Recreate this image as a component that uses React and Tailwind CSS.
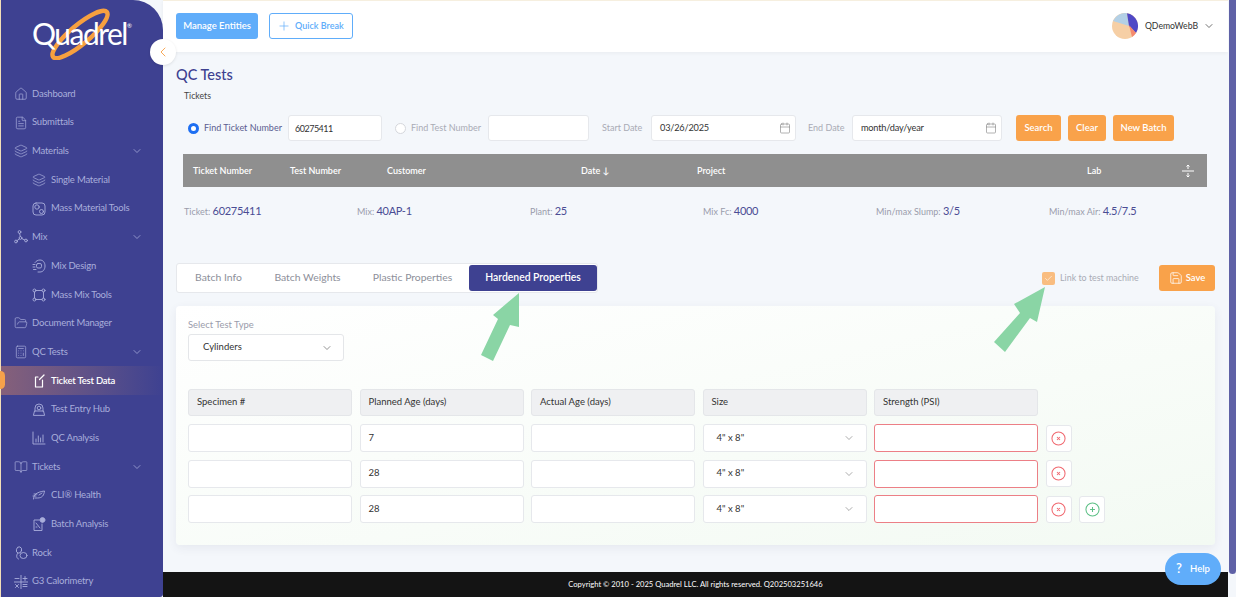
import {
  BookOpen, Calendar, ChevronDown, ChevronLeft, FileText, FolderOpen, House, Layers, Plus, Save, Check, Calculator,
} from 'lucide-react'

const line = { fill: 'none', stroke: 'currentColor', strokeWidth: 0.9, strokeLinecap: 'round', strokeLinejoin: 'round' }

function Glyph({ children }) {
  return <svg viewBox="0 0 14 14" className="w-[14px] h-[14px] shrink-0" {...line}>{children}</svg>
}

const MassMaterial = () => (
  <Glyph>
    <rect x="1" y="1" width="12" height="12" rx="3" />
    <circle cx="5" cy="5" r="2.2" />
    <circle cx="9.5" cy="9.5" r="2" />
  </Glyph>
)
const MixNodes = () => (
  <Glyph>
    <circle cx="5.5" cy="2" r="1.4" />
    <circle cx="2" cy="11.5" r="1.4" />
    <circle cx="6.5" cy="8" r="1.4" />
    <circle cx="12" cy="10.5" r="1.4" />
    <path d="M5.6 3.4L6.3 6.6M5.4 8.9L3.1 10.6M7.8 8.6L10.7 10" />
  </Glyph>
)
const MixDesign = () => (
  <Glyph>
    <path d="M3 3.5C4 2 6 1 8 1c3 0 5 2.5 5 6 0 3.5-2 6-5 6H6" />
    <rect x="4.5" y="4.5" width="5" height="4.5" rx="1.5" />
    <path d="M1 5.5h2M1 8h2M1.5 10.5h2.5" />
  </Glyph>
)
const MassMix = () => (
  <Glyph>
    <circle cx="2.5" cy="2.5" r="1.5" />
    <circle cx="11.5" cy="2.5" r="1.5" />
    <circle cx="2.5" cy="11.5" r="1.5" />
    <circle cx="11.5" cy="11.5" r="1.5" />
    <path d="M4 2.5h6M2.5 4v6M11.5 4v6M4 11.5h6" />
  </Glyph>
)
const TicketData = () => (
  <Glyph>
    <path d="M6 3H3.5v10h7V6" strokeWidth="1.2" />
    <path d="M7.5 5.5L12 1" strokeWidth="1.2" />
  </Glyph>
)
const EntryHub = () => (
  <Glyph>
    <path d="M3 9V6a4 4 0 0 1 8 0v3" />
    <circle cx="7" cy="6" r="1.8" />
    <path d="M1.5 13l1-4h9l1 4z" />
  </Glyph>
)
const Analysis = () => (
  <Glyph>
    <path d="M1 1v12h12M4 11V8M6.3 11V5M8.6 11V7M11 11V4" />
  </Glyph>
)
const CliHealth = () => (
  <Glyph>
    <path d="M1.5 11c0-4 3-7 11-8-.5 4-2 7-7 7H3" />
    <path d="M1 8h3M2 6h3M7 7l3-2" />
  </Glyph>
)
const BatchDoc = () => (
  <Glyph>
    <path d="M8 3H2v10.5h8V7" />
    <path d="M4 6l4 5M4 10h1" />
    <circle cx="10.5" cy="3" r="2.4" fill="currentColor" />
  </Glyph>
)
const Rock = () => (
  <Glyph>
    <ellipse cx="5" cy="4" rx="2.6" ry="3.2" transform="rotate(15 5 4)" />
    <path d="M3.5 7.5C2 9.5 2.5 12.5 4.5 13" />
    <ellipse cx="9.5" cy="9.5" rx="3.5" ry="3" />
  </Glyph>
)
const MathGrid = () => (
  <Glyph>
    <path d="M0 7h14M7 0v14M1 3.5h4M9 3.5h4M11 1.5v4M9 9.5h4M9 11.5h4M1.5 9.5l3 3M4.5 9.5l-3 3" />
  </Glyph>
)
const Lucide = (Icon) => () => <Icon className="w-[14px] h-[14px] shrink-0" strokeWidth={1.2} />

const nav = [
  { label: 'Dashboard', icon: Lucide(House) },
  { label: 'Submittals', icon: Lucide(FileText) },
  { label: 'Materials', icon: Lucide(Layers), caret: true },
  { label: 'Single Material', icon: Lucide(Layers), sub: true },
  { label: 'Mass Material Tools', icon: MassMaterial, sub: true },
  { label: 'Mix', icon: MixNodes, caret: true },
  { label: 'Mix Design', icon: MixDesign, sub: true },
  { label: 'Mass Mix Tools', icon: MassMix, sub: true },
  { label: 'Document Manager', icon: Lucide(FolderOpen) },
  { label: 'QC Tests', icon: Lucide(Calculator), caret: true },
  { label: 'Ticket Test Data', icon: TicketData, sub: true, active: true },
  { label: 'Test Entry Hub', icon: EntryHub, sub: true },
  { label: 'QC Analysis', icon: Analysis, sub: true },
  { label: 'Tickets', icon: Lucide(BookOpen), caret: true },
  { label: 'CLI® Health', icon: CliHealth, sub: true },
  { label: 'Batch Analysis', icon: BatchDoc, sub: true },
  { label: 'Rock', icon: Rock },
  { label: 'G3 Calorimetry', icon: MathGrid },
]

function NavRow({ item }) {
  const Icon = item.icon
  return (
    <div className={`relative flex items-center h-[28.7px] pr-[20px] text-[9.5px] tracking-[-0.2px] ${item.sub ? 'pl-[31px]' : 'pl-[13px]'} ${item.active ? 'bg-gradient-to-r from-[#86607a] to-[#3e4191] text-white font-semibold' : 'text-[#a9aedb]'}`}>
      {item.active && <span className="absolute -left-[5px] top-[5px] w-[9px] h-[18px] rounded-full bg-[#f7a14a]" />}
      <Icon />
      <span className={`whitespace-nowrap ${item.sub ? 'ml-[5px]' : 'ml-[4px]'}`}>{item.label}</span>
      {item.caret && <ChevronDown className="ml-auto w-[12px] h-[12px]" strokeWidth={1.5} />}
    </div>
  )
}

function Sidebar() {
  return (
    <aside className="relative w-[163px] shrink-0 bg-[#3e4191] rounded-tr-[30px] rounded-br-[3px] border-l border-[#f3dfb8]">
      <div className="absolute left-[33px] top-[8px] w-[100px] h-[52px]">
        <svg viewBox="0 0 100 52" className="absolute inset-0 w-full h-full" fill="none">
          <ellipse cx="46" cy="26.5" rx="35" ry="9.5" transform="rotate(-40 46 26.5)" stroke="#f7a03f" strokeWidth="4.5" />
        </svg>
        <span className="absolute -left-[2px] top-[7px] text-[30px] leading-[36px] tracking-[-1.5px] text-white">Quadrel</span>
        <span className="absolute left-[93px] top-[14px] text-[6px] leading-[8px] text-white">®</span>
      </div>
      <nav className="pt-[79.5px]">
        {nav.map((item) => <NavRow key={item.label} item={item} />)}
      </nav>
    </aside>
  )
}

function Field({ value, className = '' }) {
  return (
    <input readOnly value={value} className={`h-[26px] rounded-[3px] border border-[#e6e8ec] bg-white px-[6px] text-[9px] tracking-[-0.5px] text-[#333] outline-none ${className}`} />
  )
}

function DateField({ value, className = '' }) {
  return (
    <div className={`flex items-center justify-between h-[26px] rounded-[3px] border border-[#e6e8ec] bg-white pl-[8px] pr-[4px] text-[9.2px] tracking-[-0.2px] text-[#333] ${className}`}>
      <span>{value}</span>
      <Calendar className="w-[12px] h-[12px] text-[#888]" strokeWidth={1.3} />
    </div>
  )
}

function OrangeButton({ children, className = '' }) {
  return (
    <button className={`h-[26px] rounded-[3px] bg-[#f9a24a] text-white text-[9.5px] font-semibold ${className}`}>{children}</button>
  )
}

function Cell({ children, invalid, className = '' }) {
  return (
    <div className={`flex items-center w-[164px] h-[28px] rounded-[3px] border bg-white text-[9.5px] text-[#333] ${invalid ? 'border-[#ec7f86]' : 'border-[#e6e8ec]'} ${className}`}>
      {children}
    </div>
  )
}

function IconCell({ color, children }) {
  return (
    <div className={`flex items-center justify-center w-[26px] h-[27px] rounded-[3px] border border-[#e6e8ec] bg-white ${color}`}>
      <svg viewBox="0 0 16 16" className="w-[15px] h-[15px]" fill="none" stroke="currentColor" strokeWidth="1.1">
        <circle cx="8" cy="8" r="7" />
        {children}
      </svg>
    </div>
  )
}

function Row({ age, add }) {
  return (
    <div className="flex gap-[7.5px] items-center">
      <Cell />
      <Cell className="pl-[8px]">{age}</Cell>
      <Cell />
      <Cell className="justify-between pl-[13px] pr-[11px]">
        4" x 8"
        <ChevronDown className="w-[12px] h-[12px] text-[#888]" strokeWidth={1.4} />
      </Cell>
      <Cell invalid />
      <IconCell color="text-[#f0686f]">
        <path d="M6.4 6.4l3.2 3.2M9.6 6.4l-3.2 3.2" />
      </IconCell>
      {add && (
        <IconCell color="text-[#5cbf85]">
          <path d="M8 5.4v5.2M5.4 8h5.2" />
        </IconCell>
      )}
    </div>
  )
}

function Head({ children }) {
  return (
    <div className="flex items-center w-[164px] h-[27px] rounded-[3px] border border-[#e4e6e9] bg-[#eff0f2] pl-[8px] text-[9.5px] text-[#333]">{children}</div>
  )
}

function Stat({ label, value }) {
  return (
    <div className="whitespace-nowrap text-[9px] text-[#9a9cab]">
      {label}: <span className="text-[11px] tracking-[-0.3px] text-[#4a4c94]">{value}</span>
    </div>
  )
}

export default function App() {
  return (
    <div className="relative flex w-[1236px] h-[597px] overflow-hidden bg-[#f4f7fb] font-['Lato',sans-serif]">
      <Sidebar />
      <button className="absolute left-[150px] top-[39px] w-[26px] h-[26px] rounded-full bg-white shadow-[0_1px_3px_rgba(0,0,0,0.1)] flex items-center justify-center z-10">
        <ChevronLeft className="w-[16px] h-[16px] text-[#f7a14a]" strokeWidth={1.4} />
      </button>

      <main className="flex-1 min-w-0 flex flex-col">
        <header className="flex items-start h-[52px] shrink-0 bg-white border-t border-[#f6efdf] shadow-[0_1px_4px_rgba(0,0,0,0.05)] pt-[12px] pl-[13px] pr-[13px]">
          <button className="w-[82px] h-[26px] rounded-[3px] bg-[#60adfa] text-white text-[9.5px] font-semibold">Manage Entities</button>
          <button className="flex items-center gap-[4px] ml-[11px] pl-[7px] w-[84px] h-[26px] rounded-[3px] border border-[#60adfa] text-[#60adfa] text-[9px] font-semibold">
            <Plus className="w-[14px] h-[14px]" strokeWidth={1.2} />
            Quick Break
          </button>
          <svg viewBox="0 0 26 26" className="ml-auto w-[26px] h-[26px]">
            <circle cx="13" cy="13" r="13" fill="#f6cfa5" />
            <path d="M15 0.2 A13 13 0 0 0 1 8 L17 13 Z" fill="#b3d0e6" />
            <path d="M15 0.2 A13 13 0 0 1 24 20 L17 13 Z" fill="#4f48c6" />
            <path d="M17 12 L24 20 A13 13 0 0 1 20 24 Z" fill="#f58a6e" />
          </svg>
          <span className="ml-[7px] leading-[26px] text-[8.7px] text-[#333]">QDemoWebB</span>
          <span className="flex items-center h-[26px] ml-[5px]">
            <ChevronDown className="w-[12px] h-[12px] text-[#444]" strokeWidth={1.5} />
          </span>
        </header>

        <section className="flex-1 min-h-0 pl-[13px] pr-[13px]">
          <h1 className="mt-[13px] text-[14.5px] leading-[20px] font-medium text-[#3e4191]">QC Tests</h1>
          <p className="mt-[4px] ml-[8px] text-[8.7px] leading-[14px] text-[#444]">Tickets</p>

          <div className="flex items-center ml-[12px] mt-[12px]">
            <span className="w-[11px] h-[11px] rounded-full border-[3px] border-[#1e6ff2] bg-white" />
            <span className="ml-[5px] w-[77px] text-[9px] text-[#5b5d90] whitespace-nowrap">Find Ticket Number</span>
            <Field value="60275411" className="ml-[7px] w-[94px]" />
            <span className="ml-[13px] w-[11px] h-[11px] rounded-full border border-[#d5d7dc] bg-white" />
            <span className="ml-[5px] w-[70px] text-[9px] text-[#a9abb5] whitespace-nowrap">Find Test Number</span>
            <Field value="" className="ml-[7px] w-[101px]" />
            <span className="ml-[13px] w-[41px] text-[9px] text-[#a9abb5] whitespace-nowrap">Start Date</span>
            <DateField value="03/26/2025" className="ml-[8px] w-[145px]" />
            <span className="ml-[12px] w-[37px] text-[9px] text-[#a9abb5] whitespace-nowrap">End Date</span>
            <DateField value="month/day/year" className="ml-[7px] w-[150px]" />
            <OrangeButton className="ml-[14px] w-[45px]">Search</OrangeButton>
            <OrangeButton className="ml-[7px] w-[38px]">Clear</OrangeButton>
            <OrangeButton className="ml-[7px] w-[61px]">New Batch</OrangeButton>
          </div>

          <div className="flex items-center ml-[7px] mt-[13px] w-[1024px] h-[33px] bg-[#8f8f8f] text-white text-[9px] font-semibold">
            <span className="ml-[10px] w-[97px]">Ticket Number</span>
            <span className="w-[97px]">Test Number</span>
            <span className="w-[194px]">Customer</span>
            <span className="w-[116px]">Date ↓</span>
            <span className="w-[390px]">Project</span>
            <span className="w-[94px]">Lab</span>
            <svg viewBox="0 0 14 14" className="w-[14px] h-[14px]" fill="none" stroke="currentColor" strokeWidth="1">
              <path d="M1 7h12M7 1v4M5.5 2.5L7 1l1.5 1.5M7 9v4M5.5 11.5L7 13l1.5-1.5" />
            </svg>
          </div>

          <div className="grid grid-cols-[173px_173px_173px_173px_173px_173px] ml-[8px] mt-[15px] h-[18px] items-center">
            <Stat label="Ticket" value="60275411" />
            <Stat label="Mix" value="40AP-1" />
            <Stat label="Plant" value="25" />
            <Stat label="Mix Fc" value="4000" />
            <Stat label="Min/max Slump" value="3/5" />
            <Stat label="Min/max Air" value="4.5/7.5" />
          </div>

          <div className="flex items-center mt-[43px]">
            <div className="flex items-center w-[422px] h-[30px] rounded-[3px] border border-[#e6e8ec] bg-white pl-[1px] text-[10.4px] text-[#8d8f9a]">
              <span className="w-[81px] text-center">Batch Info</span>
              <span className="w-[97px] text-center">Batch Weights</span>
              <span className="w-[113px] text-center">Plastic Properties</span>
              <span className="flex items-center justify-center w-[128px] h-[26px] rounded-[3px] bg-[#3e4191] text-white font-semibold">Hardened Properties</span>
            </div>
            <span className="ml-auto flex items-center justify-center w-[13px] h-[13px] rounded-[2px] bg-[#f9bd80] text-white">
              <Check className="w-[9px] h-[9px]" strokeWidth={1.5} />
            </span>
            <span className="ml-[5px] w-[79px] whitespace-nowrap text-[8.9px] text-[#a9abb5]">Link to test machine</span>
            <button className="flex items-center justify-center gap-[3px] ml-[20px] w-[56px] h-[26px] rounded-[3px] bg-[#f9a24a] text-white text-[9.5px] font-semibold">
              <Save className="w-[14px] h-[14px]" strokeWidth={1.3} />
              Save
            </button>
          </div>

          <div className="mt-[13px] w-[1039px] h-[239px] rounded-[4px] bg-gradient-to-br from-white to-[#f3faf3] shadow-[0_3px_10px_rgba(60,70,100,0.08)] pl-[12px] pt-[13px]">
            <p className="text-[9.4px] leading-[12px] text-[#9a9cab]">Select Test Type</p>
            <div className="flex items-center justify-between mt-[3px] w-[156px] h-[27px] rounded-[3px] border border-[#e4e6e9] bg-white pl-[14px] pr-[10px] text-[9.5px] text-[#333]">
              Cylinders
              <ChevronDown className="w-[12px] h-[12px] text-[#666]" strokeWidth={1.4} />
            </div>
            <div className="flex gap-[7.5px] mt-[28px]">
              <Head>Specimen #</Head>
              <Head>Planned Age (days)</Head>
              <Head>Actual Age (days)</Head>
              <Head>Size</Head>
              <Head>Strength (PSI)</Head>
            </div>
            <div className="flex flex-col gap-[7.5px] mt-[8px]">
              <Row age="7" />
              <Row age="28" />
              <Row age="28" add />
            </div>
          </div>
        </section>

        <footer className="flex items-center justify-center h-[25px] shrink-0 bg-[#141414] text-white text-[7.6px]">
          Copyright © 2010 - 2025 Quadrel LLC. All rights reserved. Q202503251646
        </footer>
      </main>

      <div className="w-[8px] shrink-0 bg-[#f4f7fb]">
        <div className="w-[7px] h-[574px] ml-[1px] bg-[#5f61a6] rounded-b-[4px]" />
      </div>

      {/* annotation arrows over the page */}
      <svg viewBox="0 0 1236 597" className="absolute inset-0 w-[1236px] h-[597px] pointer-events-none">
        <path d="M519 293 L519 327 L510 325 L493 361 L481 355 L498 319 L493 315 Z" fill="#8ad5a5" />
        <path d="M1045 287 L1037 322 L1030 318 L1005 352 L994 342 L1020 313 L1014 304 Z" fill="#8ad5a5" />
      </svg>

      <button className="absolute left-[1165px] top-[553px] flex items-center justify-center gap-[8px] w-[56px] h-[32px] rounded-full bg-[#60adfa] text-white text-[9.5px] font-semibold">
        <span className="text-[13px]">?</span>
        Help
      </button>
    </div>
  )
}
